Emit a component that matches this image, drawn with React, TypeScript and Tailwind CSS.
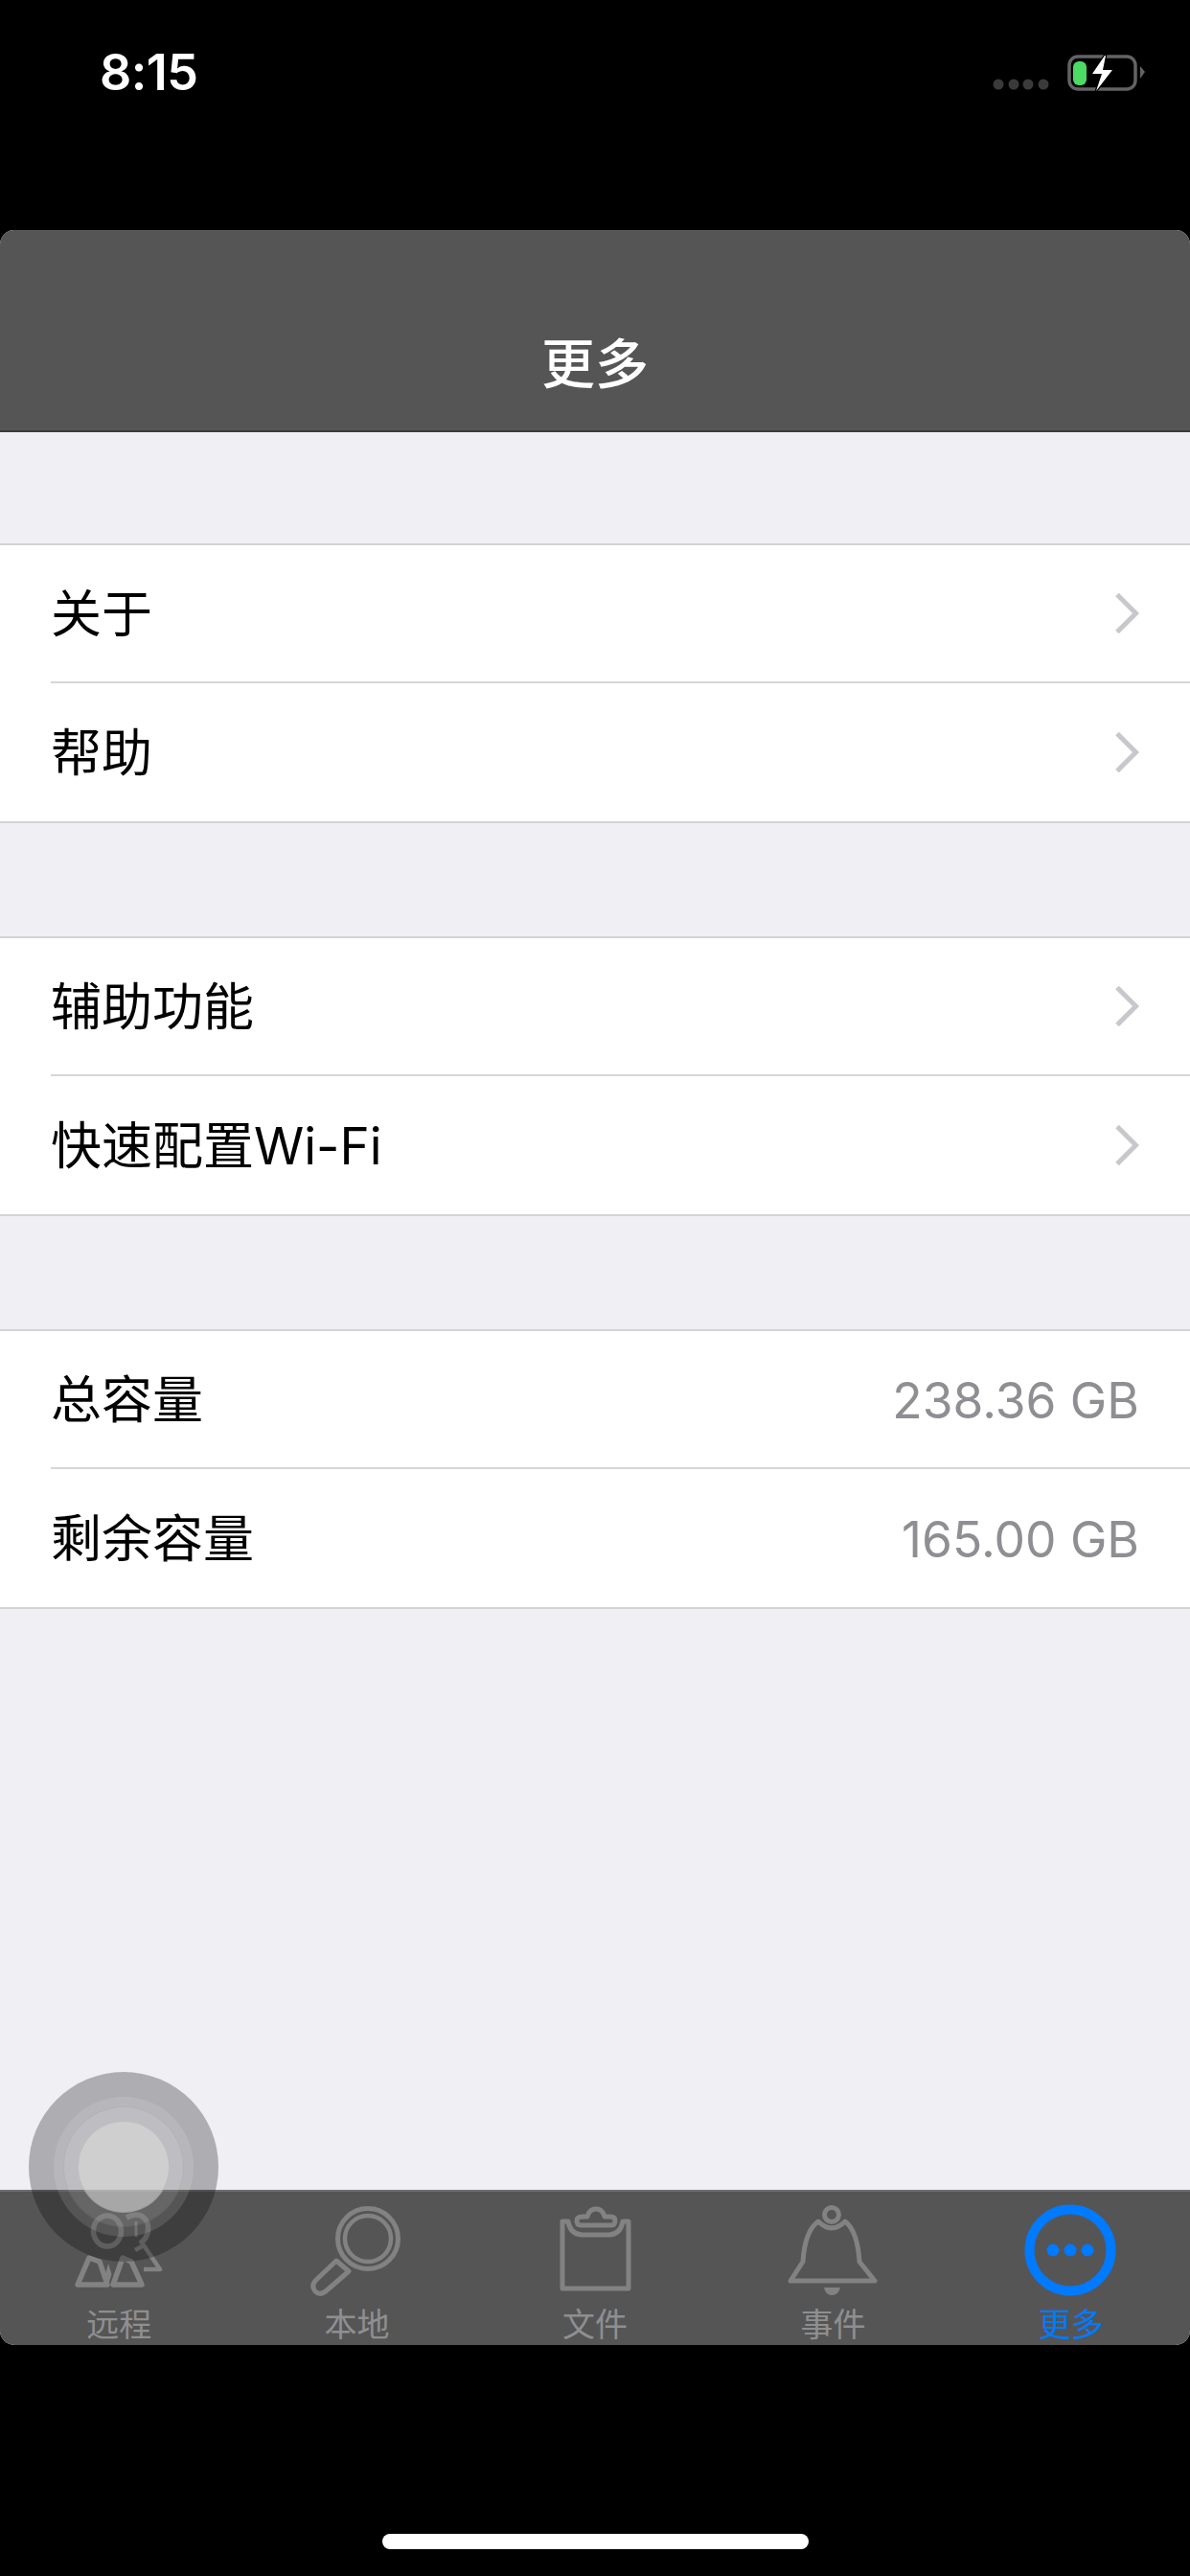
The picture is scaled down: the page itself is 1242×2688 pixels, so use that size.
import React from "react";

const cjk = { fontFamily: '"Noto Sans CJK SC", sans-serif' };
const mixed = { fontFamily: 'Inter, "Noto Sans CJK SC", sans-serif' };

function Chevron() {
  return (
    <svg width="26" height="44" viewBox="0 0 26 44" className="shrink-0">
      <path d="M3 2.5 L22.5 22 L3 41.5" fill="none" stroke="#c7c7cc" strokeWidth="5" />
    </svg>
  );
}

function Row({ label, value, last }: { label: string; value?: string; last?: boolean }) {
  return (
    <div className="pl-[53px] h-[144px]">
      <div className={`h-full flex items-center justify-between pr-[53px] ${last ? "" : "border-b-2 border-[#d6d6da]"}`}>
        <span className="text-[53px] leading-none text-black mt-[3px]" style={mixed}>{label}</span>
        {value ? (
          <span className="text-[51.5px] leading-none text-[#8e8e93] mt-[3px] [font-family:Inter,sans-serif]">{value}</span>
        ) : (
          <Chevron />
        )}
      </div>
    </div>
  );
}

function Section({ children }: { children: React.ReactNode }) {
  return <div className="bg-white border-y-2 border-[#d3d3d7]">{children}</div>;
}

const grey = "#828283";

function PersonIcon() {
  return (
    <svg width="130" height="110" viewBox="59 0 130 110" fill="none" stroke={grey} strokeWidth="5.500" strokeLinejoin="round">
      <ellipse cx="112" cy="38" rx="14.500" ry="16" />
      <path d="M132 24 Q148 16 154 30 Q157 44 146 51" />
      <path d="M142 28 V44" strokeWidth="3" />
      <path d="M93 66 L81 94 H112 L104 70 Z" />
      <path d="M128 66 L118 94 H148 L137 70 Z" />
      <path d="M113 72 L110 83 L113.500 93 L116.500 83 Z" fill={grey} stroke="none" />
      <path d="M141 58 L150 53 L167 78 H150" strokeWidth="4.500" />
    </svg>
  );
}

function SearchIcon() {
  return (
    <svg width="130" height="110" viewBox="308 0 130 110" fill="none" stroke={grey}>
      <circle cx="384" cy="46" r="31.500" strokeWidth="5" />
      <circle cx="384" cy="46" r="24" strokeWidth="4.500" />
      <path d="M351 69 L364 80 L341 100 Q334 106 329 101 Q324 95 330 89 Z" strokeWidth="5" strokeLinejoin="round" />
    </svg>
  );
}

function ClipIcon() {
  return (
    <svg width="130" height="110" viewBox="556 0 130 110" fill="none" stroke={grey} strokeWidth="5" strokeLinejoin="round">
      <path d="M587 28 V98 H656 V28 H650 Q648 41 636 42 H607 Q595 41 593 28 Z" />
      <path d="M606 32 Q602 32 602 27 Q602 23 608 23 H613 Q615 15 622 15 Q629 15 631 23 H637 Q642 23 642 27 Q642 32 638 32 Z" />
    </svg>
  );
}

function BellIcon() {
  return (
    <svg width="130" height="110" viewBox="804 0 130 110" fill="none" stroke={grey} strokeWidth="5" strokeLinejoin="round">
      <circle cx="868" cy="21" r="7.500" />
      <path d="M854 28 Q868 42 882 28 Q895 38 897 70 L913 90 H825 L838 70 Q840 38 854 28 Z" />
      <path d="M860 97 H877 Q875 105 868 105 Q862 105 860 97 Z" fill={grey} stroke="none" />
    </svg>
  );
}

function MoreIcon() {
  return (
    <svg width="130" height="110" viewBox="1053 0 130 110" fill="none">
      <circle cx="1117" cy="58" r="42.500" stroke="#007aff" strokeWidth="10" />
      <circle cx="1099" cy="58" r="6.500" fill="#007aff" />
      <circle cx="1117" cy="58" r="6.500" fill="#007aff" />
      <circle cx="1135" cy="58" r="6.500" fill="#007aff" />
    </svg>
  );
}

function Tab({ icon, label, active }: { icon: React.ReactNode; label: string; active?: boolean }) {
  return (
    <div className="flex-1 flex flex-col items-center">
      <div className="h-[110px] blur-[0.6px]">{icon}</div>
      <span
        className={`mt-[4px] text-[34px] leading-[40px] ${active ? "text-[#007aff]" : "text-[#8f8f90]"}`}
        style={cjk}
      >
        {label}
      </span>
    </div>
  );
}

export default function App() {
  return (
    <div className="relative w-[1242px] h-[2688px] bg-black overflow-hidden flex flex-col">
      <div className="h-[240px] shrink-0 flex items-start justify-between pl-[104px] pr-[46px] pt-[48px]">
        <span className="text-[52px] leading-[56px] font-semibold text-white tracking-[-0.5px] [font-family:Inter,sans-serif]">8:15</span>
        <svg width="160" height="40" viewBox="1036 57 160 40" className="mt-[9px]">
          <circle cx="1042" cy="88" r="5.500" fill="#3a3a3c" />
          <circle cx="1058" cy="88" r="5.500" fill="#3a3a3c" />
          <circle cx="1073" cy="88" r="5.500" fill="#3a3a3c" />
          <circle cx="1089" cy="88" r="5.500" fill="#3a3a3c" />
          <rect x="1116" y="59" width="69" height="34" rx="9" fill="none" stroke="#636366" strokeWidth="3.500" />
          <path d="M1190 69 L1195 75 L1190 82 Z" fill="#636366" />
          <rect x="1120" y="64" width="14" height="25" rx="6" fill="#4cd964" />
          <path d="M1153 58 L1140 77 H1150 L1144 95 L1161 73 H1151 L1154 58 Z" fill="#fff" stroke="#000" strokeWidth="2.500" paintOrder="stroke" />
        </svg>
      </div>

      <div className="h-[2207px] shrink-0 rounded-[15px] overflow-hidden flex flex-col bg-[#efeff4]">
        <div className="h-[211px] shrink-0 bg-[#555556] border-b-2 border-[#3b3b3c] flex items-end justify-center pb-[37px]">
          <span className="text-[56px] leading-[72px] font-medium text-white" style={cjk}>更多</span>
        </div>

        <div className="flex-1 flex flex-col gap-[118px] pt-[116px]">
          <Section>
            <Row label="关于" />
            <Row label="帮助" last />
          </Section>
          <Section>
            <Row label="辅助功能" />
            <Row label="快速配置Wi-Fi" last />
          </Section>
          <Section>
            <Row label="总容量" value="238.36 GB" />
            <Row label="剩余容量" value="165.00 GB" last />
          </Section>
        </div>

        <div className="h-[162px] shrink-0 bg-[#555556] border-t-2 border-[#6f6f70] flex pt-[3px]">
          <Tab icon={<PersonIcon />} label="远程" />
          <Tab icon={<SearchIcon />} label="本地" />
          <Tab icon={<ClipIcon />} label="文件" />
          <Tab icon={<BellIcon />} label="事件" />
          <Tab icon={<MoreIcon />} label="更多" active />
        </div>
      </div>

      <div className="flex-1 flex items-end justify-center pb-[28px]">
        <div className="w-[445px] h-[16px] rounded-full bg-white" />
      </div>

      <div className="absolute left-[30px] top-[2162px] w-[198px] h-[198px] rounded-full bg-black/[0.27] flex items-center justify-center">
        <div className="w-[146px] h-[146px] rounded-full bg-white/[0.12] flex items-center justify-center">
          <div className="w-[126px] h-[126px] rounded-full bg-white/[0.10] border border-black/[0.06] flex items-center justify-center">
            <div className="w-[96px] h-[96px] rounded-full bg-[#dddddd]/55 border border-black/[0.08]" />
          </div>
        </div>
      </div>
    </div>
  );
}
